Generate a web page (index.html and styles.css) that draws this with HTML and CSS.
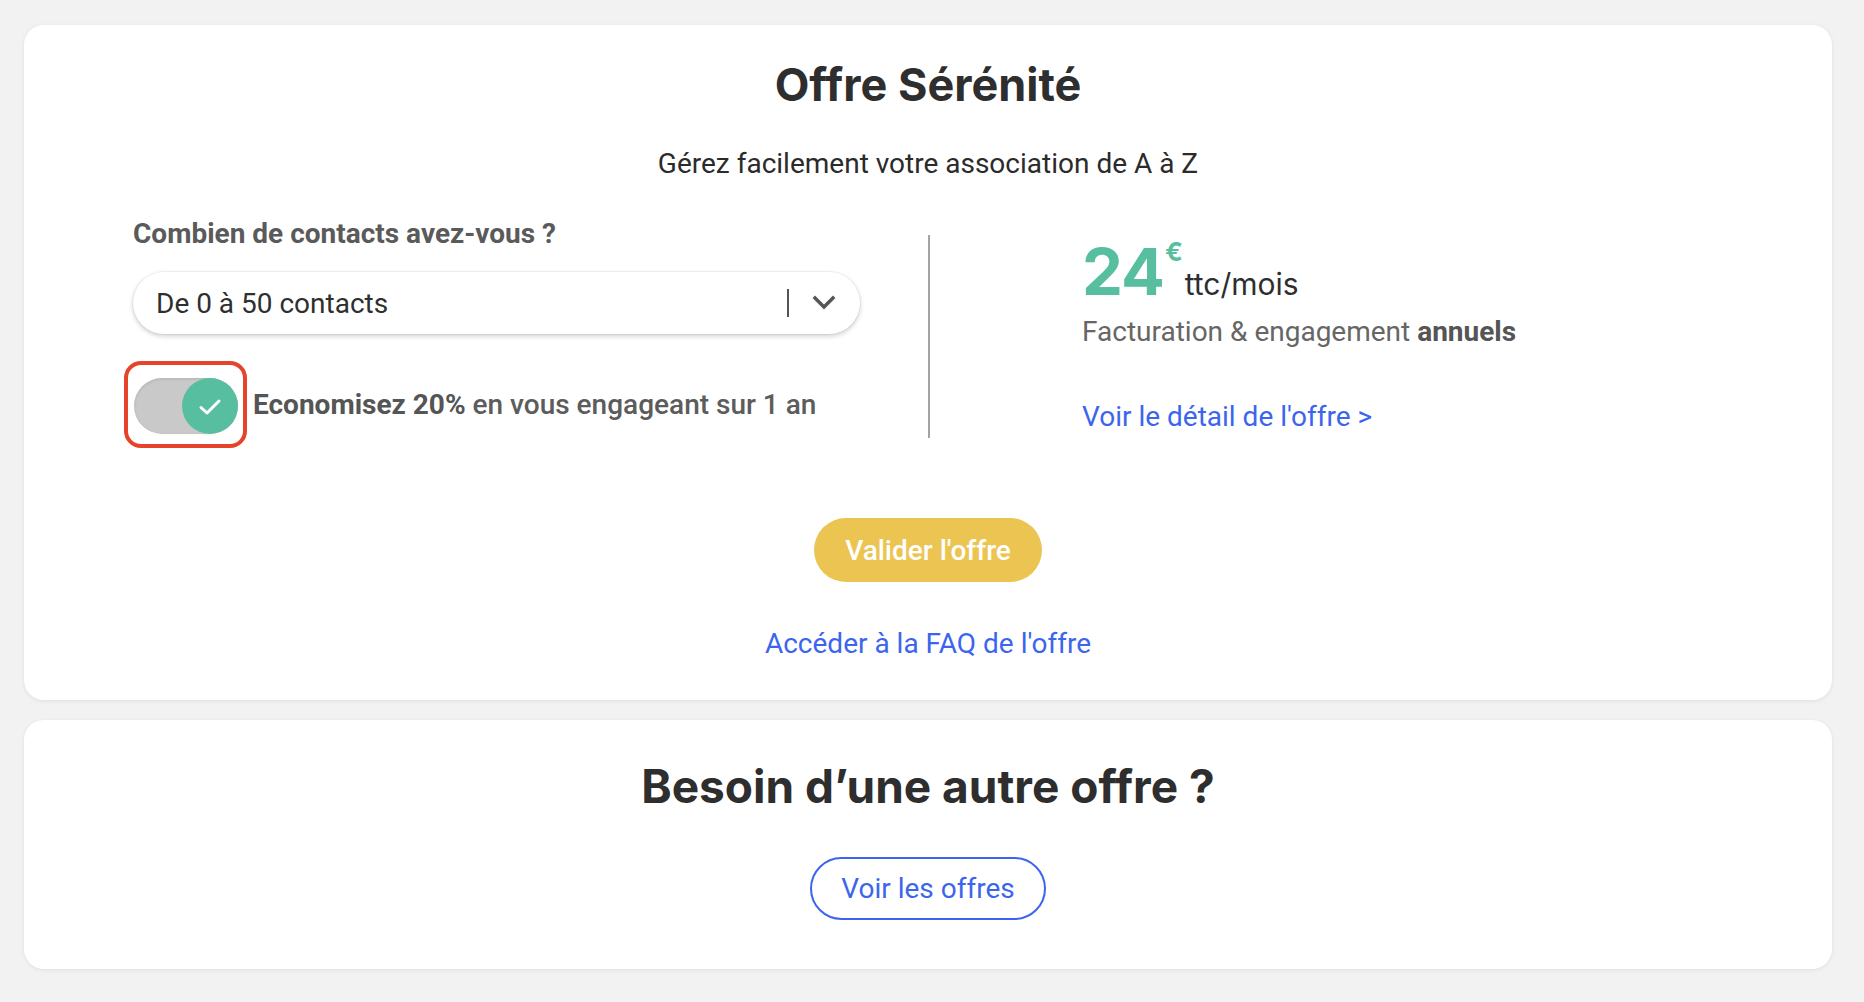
FILE: index.html
```html
<!DOCTYPE html>
<html lang="fr">
<head>
<meta charset="utf-8">
<title>Offre Sérénité</title>
<link rel="stylesheet" href="styles.css">
</head>
<body>
<main class="page">
  <section class="card card-offer">
    <h1 class="title">Offre Sérénité</h1>
    <p class="subtitle">Gérez facilement votre association de A à Z</p>
    <div class="columns">
      <div class="col-left">
        <p class="label">Combien de contacts avez-vous ?</p>
        <div class="select">
          <span class="select-value">De 0 à 50 contacts</span>
          <span class="select-sep"></span>
          <svg class="chevron" width="24" height="16" viewBox="0 0 24 16"><path d="M3 3 L12 12 L21 3" fill="none" stroke="#555" stroke-width="3.4" stroke-linecap="square"/></svg>
        </div>
        <div class="toggle-row">
          <span class="toggle-frame">
            <span class="toggle">
              <span class="knob">
                <svg width="26" height="20" viewBox="0 0 26 20"><path d="M4 10.5 L10 16 L22 4" fill="none" stroke="#fff" stroke-width="3" stroke-linecap="round" stroke-linejoin="round"/></svg>
              </span>
            </span>
          </span>
          <span class="toggle-text"><b>Economisez 20%</b> en vous engageant sur 1 an</span>
        </div>
      </div>
      <div class="divider"></div>
      <div class="col-right">
        <div class="price">
          <span class="amount">24</span><span class="eur">€</span><span class="per">ttc/mois</span>
        </div>
        <p class="billing">Facturation &amp; engagement <b>annuels</b></p>
        <a class="link detail" href="#">Voir le détail de l'offre &gt;</a>
      </div>
    </div>
    <div class="actions">
      <a class="btn btn-primary" href="#">Valider l'offre</a>
      <a class="link faq" href="#">Accéder à la FAQ de l'offre</a>
    </div>
  </section>
  <section class="card card-other">
    <h2 class="title title-other">Besoin d’une autre offre ?</h2>
    <a class="btn btn-outline" href="#">Voir les offres</a>
  </section>
</main>
</body>
</html>
```
FILE: styles.css
```css
* { box-sizing: border-box; }
html, body { margin: 0; padding: 0; }
body {
  background: #f2f2f2;
  font-family: Roboto, "Liberation Sans", Arial, sans-serif;
  color: #2b2b2b;
}
.page {
  padding: 25px 32px 30px 24px;
  display: flex;
  flex-direction: column;
  gap: 20px;
}
.card {
  background: #fff;
  border-radius: 20px;
  box-shadow: 0 1px 4px rgba(0,0,0,0.08);
  display: flex;
  flex-direction: column;
  align-items: center;
}
.card-offer { padding: 35px 0 42px; height: 675px; }
.card-other { padding: 41px 0 49px; height: 249px; }
.title {
  margin: 0;
  font-family: Inter, "Noto Sans", sans-serif;
  font-weight: 700;
  font-size: 45px;
  line-height: 50px;
  color: #2e2e2e;
}
.subtitle {
  margin: 39px 0 0;
  font-size: 28px;
  line-height: 30px;
  color: #2b2b2b;
}
.columns {
  align-self: stretch;
  display: flex;
  margin-top: 40px;
}
.col-left {
  width: 904px;
  padding-left: 109px;
  display: flex;
  flex-direction: column;
  align-items: flex-start;
}
.label {
  margin: 0;
  font-size: 28px;
  line-height: 30px;
  font-weight: 700;
  color: #5a5a5a;
}
.select {
  margin-top: 23px;
  width: 727px;
  height: 62px;
  border-radius: 31px;
  background: #fff;
  box-shadow: 0 2px 5px rgba(0,0,0,0.2), 0 0 0 1px rgba(0,0,0,0.04);
  display: flex;
  align-items: center;
  padding: 0 24px 0 23px;
}
.select-value {
  flex: 1;
  font-size: 28px;
  color: #2f2f2f;
}
.select-sep {
  width: 2px;
  height: 28px;
  background: #555;
  margin-right: 23px;
}
.chevron { display: block; }
.toggle-row {
  margin-top: 27px;
  margin-left: -9px;
  display: flex;
  align-items: center;
}
.toggle-frame {
  display: flex;
  width: 123px;
  height: 87px;
  border: 4px solid #e5432a;
  border-radius: 17px;
  padding: 13px 5px 10px 6px;
}
.toggle {
  position: relative;
  width: 104px;
  height: 56px;
  border-radius: 28px;
  background: #c9c9c9;
  box-shadow: inset 0 1px 3px rgba(0,0,0,0.12);
}
.knob {
  position: absolute;
  right: 0;
  top: 0;
  width: 56px;
  height: 56px;
  border-radius: 50%;
  background: #57bf9f;
  display: flex;
  align-items: center;
  justify-content: center;
}
.knob svg { display: block; margin-top: 2px; }
.toggle-text {
  margin-left: 6px;
  font-size: 28px;
  font-weight: 500;
  color: #5c5c5c;
  line-height: 30px;
}
.toggle-text b { font-weight: 700; color: #555; }
.divider {
  width: 2px;
  height: 203px;
  margin-top: 16px;
  background: #a3a3a3;
}
.col-right {
  padding-left: 152px;
  display: flex;
  flex-direction: column;
  align-items: flex-start;
}
.price {
  margin-top: 20px;
  display: flex;
  align-items: baseline;
  line-height: 1;
}
.amount {
  font-family: Inter, "Noto Sans", sans-serif;
  font-weight: 700;
  font-size: 65px;
  color: #57bf9f;
  letter-spacing: -1px;
}
.eur {
  align-self: flex-start;
  font-family: Inter, "Noto Sans", sans-serif;
  font-weight: 700;
  font-size: 26px;
  color: #57bf9f;
  margin-left: 1px;
}
.per {
  font-family: Inter, "Noto Sans", sans-serif;
  font-size: 30px;
  color: #2e2e2e;
  margin-left: 2px;
}
.billing {
  margin: 13px 0 0;
  font-size: 28px;
  line-height: 30px;
  color: #666;
}
.billing b { color: #555; }
.link {
  color: #3c65ee;
  text-decoration: none;
  font-size: 28px;
  line-height: 30px;
}
.detail { margin-top: 55px; }
.actions {
  margin-top: 70px;
  display: flex;
  flex-direction: column;
  align-items: center;
}
.btn {
  display: flex;
  align-items: center;
  justify-content: center;
  font-size: 28px;
  text-decoration: none;
  border-radius: 32px;
}
.btn-primary {
  width: 228px;
  height: 64px;
  background: #ecc452;
  color: #fff;
  font-weight: 500;
}
.faq { margin-top: 47px; }
.title-other { font-size: 46px; }
.btn-outline {
  margin-top: 46px;
  width: 236px;
  height: 63px;
  border: 2px solid #3c65ee;
  color: #3c65ee;
  background: #fff;
}
```
